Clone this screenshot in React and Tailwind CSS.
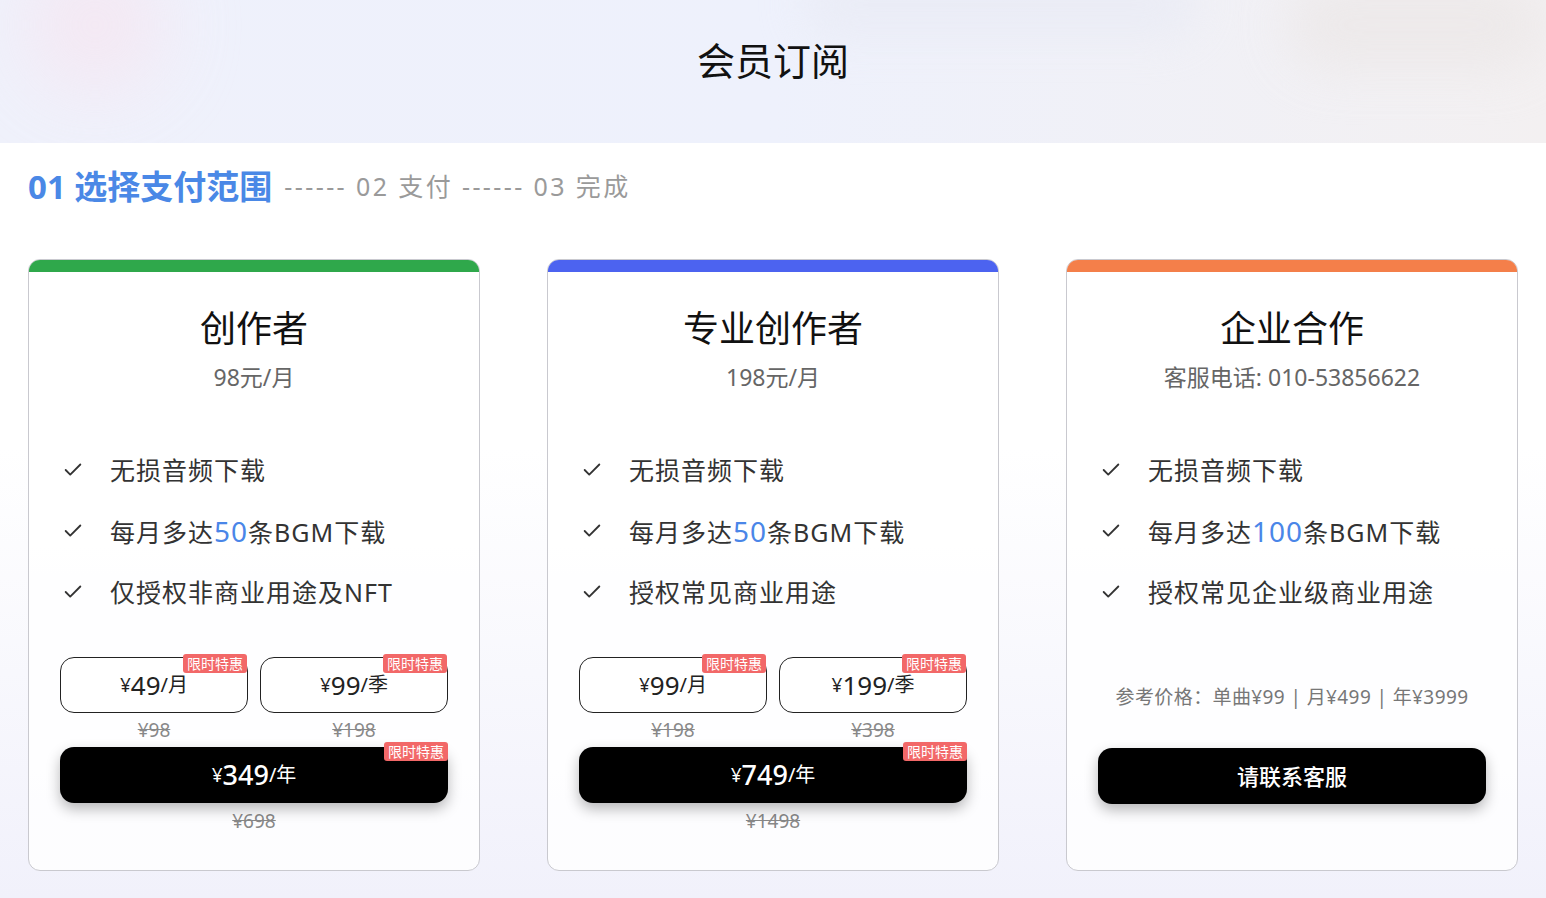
import React from 'react'
import { Check } from 'lucide-react'

const FONT = "font-['Noto_Sans','Noto_Sans_CJK_SC',sans-serif]"

// ─── Plan data ──────────────────────────────────────────────
const PLANS = [
  {
    id: 'creator',
    title: '创作者',
    sub: '98元/月',
    bar: 'bg-[#2fa84b]',
    features: [
      ['无损音频下载'],
      ['每月多达', '50', '条BGM下载'],
      ['仅授权非商业用途及NFT'],
    ],
    prices: [
      { price: '49', unit: '月', old: '¥98' },
      { price: '99', unit: '季', old: '¥198' },
    ],
    year: { price: '349', old: '¥698' },
  },
  {
    id: 'pro',
    title: '专业创作者',
    sub: '198元/月',
    bar: 'bg-[#4c63f0]',
    features: [
      ['无损音频下载'],
      ['每月多达', '50', '条BGM下载'],
      ['授权常见商业用途'],
    ],
    prices: [
      { price: '99', unit: '月', old: '¥198' },
      { price: '199', unit: '季', old: '¥398' },
    ],
    year: { price: '749', old: '¥1498' },
  },
  {
    id: 'biz',
    title: '企业合作',
    sub: '客服电话: 010-53856622',
    bar: 'bg-[#f47f4a]',
    features: [
      ['无损音频下载'],
      ['每月多达', '100', '条BGM下载'],
      ['授权常见企业级商业用途'],
    ],
    contact: true,
  },
]

function Badge({ className = '' }) {
  return (
    <span className={`absolute right-0 px-[4px] h-[19px] leading-[19px] rounded-[3px] bg-[#f26868] text-white text-[14px] ${className}`}>
      限时特惠
    </span>
  )
}

function Feature({ parts }) {
  const [a, num, b] = parts
  return (
    <div className="h-[40px] flex items-center">
      <Check className="w-[22px] h-[22px] text-[#333] shrink-0" strokeWidth={2} />
      <span className="ml-[26px] text-[25px] text-[#333] leading-[40px] tracking-[1px]">
        {a}
        {num && <span className="text-[#4a86e8] text-[28px]">{num}</span>}
        {b}
      </span>
    </div>
  )
}

function PlanCard({ plan }) {
  return (
    <div className="w-[452px] h-[612px] rounded-[12px] overflow-hidden border border-[#c9c9cf] bg-white/85 flex flex-col">
      <div className={`h-[12px] shrink-0 ${plan.bar}`} />

      {/* ── Title ── */}
      <div className="pt-[35px] text-center text-[36px] leading-[44px] text-[#111]">{plan.title}</div>
      <div className="mt-[11px] text-center text-[23px] leading-[30px] text-[#666]">{plan.sub}</div>

      {/* ── Features ── */}
      <div className="mt-[58px] pl-[33px] flex flex-col gap-[21px]">
        {plan.features.map((f, i) => <Feature key={i} parts={f} />)}
      </div>

      {plan.contact ? (
        <div className="px-[31px]">
          <div className="mt-[71px] text-center text-[19px] leading-[28px] text-[#777] tracking-[0.4px]">
            参考价格：单曲¥99 | 月¥499 | 年¥3999
          </div>
          <button className="mt-[37px] w-full h-[56px] rounded-[14px] bg-black text-white text-[22px] font-medium shadow-[0_6px_14px_rgba(0,0,0,0.28)]">
            请联系客服
          </button>
        </div>
      ) : (
        <div className="mt-[45px] px-[31px]">
          <div className="grid grid-cols-2 gap-x-[12px]">
            {plan.prices.map((p, i) => (
              <div key={i} className="flex flex-col">
                <div className="relative h-[56px] rounded-[14px] border border-[#222] bg-white flex items-center justify-center text-[#222]">
                  <Badge className="-top-[4px]" />
                  <span className="text-[19px]">¥</span>
                  <span className="text-[26px]">{p.price}</span>
                  <span className="text-[20px]">/{p.unit}</span>
                </div>
                <div className="h-[34px] flex items-center justify-center text-[19px] text-[#888] line-through">{p.old}</div>
              </div>
            ))}
          </div>
          <div className="relative h-[56px] rounded-[14px] bg-black text-white flex items-center justify-center shadow-[0_6px_14px_rgba(0,0,0,0.28)]">
            <Badge className="-top-[5px]" />
            <span className="text-[19px]">¥</span>
            <span className="text-[27px] font-medium">{plan.year.price}</span>
            <span className="text-[20px]">/年</span>
          </div>
          <div className="h-[36px] flex items-center justify-center text-[19px] text-[#888] line-through">{plan.year.old}</div>
        </div>
      )}
    </div>
  )
}

export default function App() {
  return (
    <div className={`w-[1546px] h-[898px] overflow-hidden bg-gradient-to-b from-white via-white to-[#f1f1fb] ${FONT}`}>
      {/* ── Header ── */}
      <div className="relative h-[143px] overflow-hidden bg-gradient-to-r from-[#eff1fb] via-[#eef1fc] to-[#f3f0f1] flex justify-center pt-[41px]">
        <div className="absolute left-[30px] -top-[40px] w-[130px] h-[130px] rounded-full bg-[#f8e3ee] blur-[40px] opacity-70" />
        <div className="absolute left-[800px] -top-[30px] w-[400px] h-[70px] rounded-full bg-[#e9ebf5] blur-[20px] opacity-70" />
        <div className="absolute right-0 -top-[20px] w-[260px] h-[90px] rounded-full bg-[#ece8e8] blur-[25px] opacity-80" />
        <h1 className="relative text-[38px] text-[#111] leading-none">会员订阅</h1>
      </div>

      {/* ── Steps ── */}
      <div className="px-[28px] flex items-center h-[88px]">
        <span className="text-[33px] font-bold text-[#4a88e6]">01 选择支付范围</span>
        <span className="ml-[12px] text-[25px] text-[#9a9a9a] tracking-[2.4px]">------ 02 支付 ------ 03 完成</span>
      </div>

      {/* ── Plans ── */}
      <div className="mt-[28px] px-[28px] flex justify-between">
        {PLANS.map(p => <PlanCard key={p.id} plan={p} />)}
      </div>
    </div>
  )
}
